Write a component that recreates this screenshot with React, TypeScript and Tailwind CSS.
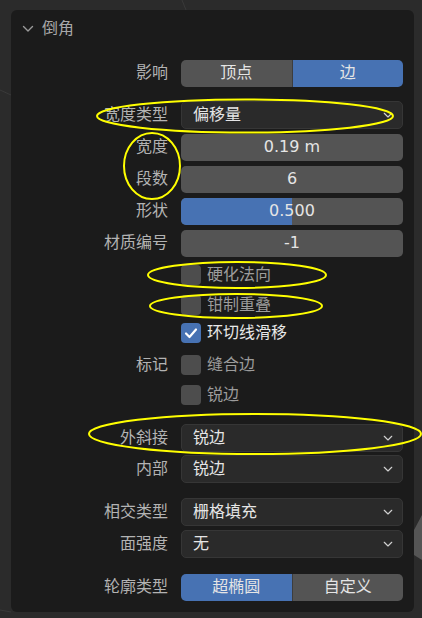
import React from 'react'

const font = {
  fontFamily: '"DejaVu Sans", "Noto Sans CJK SC", sans-serif',
}

const Chevron = ({ className = '', w = 12 }: { className?: string; w?: number }) => (
  <svg width={w} height={(w * 2) / 3} viewBox="0 0 12 8" className={className}>
    <path d="M1.5 1.5 L6 6 L10.5 1.5" fill="none" stroke="currentColor" strokeWidth="1.4" strokeLinecap="round" strokeLinejoin="round" />
  </svg>
)

const Row = ({ label, className = '', children }: { label?: string; className?: string; children: React.ReactNode }) => (
  <div className={`flex h-[28px] items-center ${className}`}>
    <div className="w-[157px] shrink-0 text-right text-[16px] text-[#b3b3b3]">{label}</div>
    <div className="ml-[13px] flex h-full flex-1 items-center">{children}</div>
  </div>
)

const Field = ({ value }: { value: string }) => (
  <div className="flex h-[27px] w-full items-center justify-center rounded-[5px] bg-[#545454] text-[16px] text-[#e5e5e5]">
    {value}
  </div>
)

const Dropdown = ({ value }: { value: string }) => (
  <div className="flex h-[28px] w-full items-center justify-between rounded-[5px] border border-[#363636] bg-[#2a2a2a] pl-[11px] pr-[9px] text-[16px] text-[#e5e5e5]">
    <span>{value}</span>
    <Chevron className="text-[#d0d0d0]" w={10} />
  </div>
)

const Check = ({ label, checked = false }: { label: string; checked?: boolean }) => (
  <div className="flex items-center gap-[6px]">
    <div
      className={`flex h-[20px] w-[20px] items-center justify-center rounded-[4px] ${
        checked ? 'bg-[#4772b3]' : 'bg-[#4d4d4d]'
      }`}
    >
      {checked && (
        <svg width="14" height="12" viewBox="0 0 14 12">
          <path d="M2 6.5 L5.5 10 L12 2.5" fill="none" stroke="#ffffff" strokeWidth="2.2" strokeLinecap="round" strokeLinejoin="round" />
        </svg>
      )}
    </div>
    <span className={`text-[16px] ${checked ? 'text-[#e8e8e8]' : 'text-[#9c9c9c]'}`}>{label}</span>
  </div>
)

const Toggle = ({ left, right, active }: { left: string; right: string; active: 'left' | 'right' }) => (
  <div className="flex h-[27px] w-full overflow-hidden rounded-[5px] text-[16px] text-[#e5e5e5]">
    <div className={`flex flex-1 items-center justify-center ${active === 'left' ? 'bg-[#4772b3]' : 'bg-[#545454]'}`}>{left}</div>
    <div className="w-px bg-[#3d3d3d]" />
    <div className={`flex flex-1 items-center justify-center ${active === 'right' ? 'bg-[#4772b3]' : 'bg-[#545454]'}`}>{right}</div>
  </div>
)

export default function App() {
  return (
    <div className="relative h-[618px] w-[422px] overflow-hidden bg-[#2b2b2b]" style={font}>
      {/* faint viewport lines behind the panel */}
      <svg className="absolute inset-0" width="422" height="618">
        <line x1="0" y1="90" x2="11" y2="95" stroke="#3a3a3a" strokeWidth="1" />
        <line x1="182" y1="0" x2="186" y2="10" stroke="#3a3a3a" strokeWidth="1" />
        <line x1="0" y1="610" x2="11" y2="612" stroke="#3a3a3a" strokeWidth="1" />
        <polygon points="414,530 422,515 422,560 414,555" fill="#555555" />
      </svg>

      <div className="relative ml-[11px] mt-[10px] flex h-[602px] w-[403px] flex-col rounded-[6px] bg-[#1b1b1b] pr-[11px]">
        <div className="flex h-[36px] items-center gap-[8px] pl-[11px] pt-[2px] text-[16px] text-[#a8a8a8]">
          <Chevron className="text-[#9a9a9a]" />
          <span>倒角</span>
        </div>

        <Row label="影响" className="mt-[13px]">
          <Toggle left="顶点" right="边" active="right" />
        </Row>
        <Row label="宽度类型" className="mt-[14px]">
          <Dropdown value="偏移量" />
        </Row>
        <Row label="宽度" className="mt-[4px]">
          <Field value="0.19 m" />
        </Row>
        <Row label="段数" className="mt-[4px]">
          <Field value="6" />
        </Row>
        <Row label="形状" className="mt-[4px]">
          <div className="relative flex h-[27px] w-full items-center justify-center overflow-hidden rounded-[5px] bg-[#545454] text-[16px] text-[#e5e5e5]">
            <div className="absolute inset-y-0 left-0 w-1/2 bg-[#4772b3]" />
            <span className="relative">0.500</span>
          </div>
        </Row>
        <Row label="材质编号" className="mt-[4px]">
          <Field value="-1" />
        </Row>
        <Row className="mt-[4px]">
          <Check label="硬化法向" />
        </Row>
        <Row className="mt-[2px]">
          <Check label="钳制重叠" />
        </Row>
        <Row className="mt-[0px]">
          <Check label="环切线滑移" checked />
        </Row>
        <Row label="标记" className="mt-[4px]">
          <Check label="缝合边" />
        </Row>
        <Row className="mt-[2px]">
          <Check label="锐边" />
        </Row>
        <Row label="外斜接" className="mt-[15px]">
          <Dropdown value="锐边" />
        </Row>
        <Row label="内部" className="mt-[3px]">
          <Dropdown value="锐边" />
        </Row>
        <Row label="相交类型" className="mt-[15px]">
          <Dropdown value="栅格填充" />
        </Row>
        <Row label="面强度" className="mt-[4px]">
          <Dropdown value="无" />
        </Row>
        <Row label="轮廓类型" className="mt-[15px]">
          <Toggle left="超椭圆" right="自定义" active="left" />
        </Row>
      </div>

      {/* yellow annotation marks */}
      <svg className="pointer-events-none absolute inset-0" width="422" height="618">
        <g fill="none" stroke="#ffff00" strokeWidth="2">
          <ellipse cx="245" cy="116" rx="148" ry="16.5" />
          <ellipse cx="152" cy="166" rx="28" ry="33" />
          <ellipse cx="237" cy="275" rx="89" ry="13" />
          <ellipse cx="236" cy="306" rx="86" ry="12" />
          <ellipse cx="255" cy="434" rx="166" ry="20" />
        </g>
      </svg>
    </div>
  )
}
